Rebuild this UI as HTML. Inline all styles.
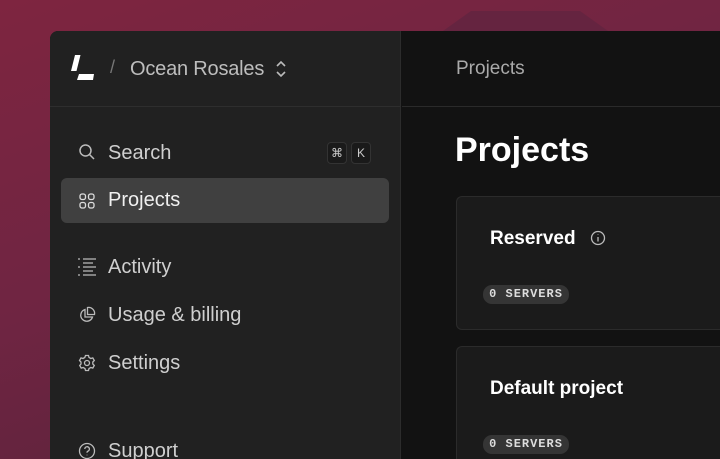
<!DOCTYPE html>
<html><head><meta charset="utf-8"><style>
*{margin:0;padding:0;box-sizing:border-box}
html,body{width:720px;height:459px;overflow:hidden}
body{position:relative;font-family:"Liberation Sans",sans-serif;background:linear-gradient(160deg,#7e2540 0%,#6f2542 45%,#522238 100%)}
.trap{position:absolute;left:443px;top:11px;width:165px;height:20px;background:#652440;clip-path:polygon(17% 0,83% 0,100% 100%,0 100%)}
.win{position:absolute;left:50px;top:31px;width:670px;height:428px;border-radius:8px 0 0 0;overflow:hidden;background:#121212}
.side{position:absolute;left:0;top:0;width:351px;height:100%;background:#212121;border-right:1px solid #2c2c2c}
.hdr{position:absolute;left:0;top:0;width:100%;height:76px;border-bottom:1px solid #2e2e2e}
.t{position:absolute;white-space:nowrap;color:#cfcfcf;font-size:20px}
.kbd{position:absolute;top:111px;width:20px;height:22px;border:1px solid #333;border-radius:4px;background:#1a1a1a;color:#ccc;font-size:12px;text-align:center;line-height:20px}
.sel{position:absolute;left:11px;top:147px;width:328px;height:45px;background:#404040;border-radius:6px}
svg{position:absolute}
.card{position:absolute;left:406px;width:264px;background:#1b1b1b;border:1px solid #2b2b2b;border-right:none;border-radius:6px 0 0 6px}
.pill{position:absolute;left:26px;background:#353535;border-radius:9px;height:19px;width:86px;color:#ddd;font-family:"Liberation Mono",monospace;font-size:12px;font-weight:bold;letter-spacing:1px;line-height:19px;text-align:center}
</style></head><body>
<div class="trap"></div>
<div class="win">
<div class="side">
<div class="hdr"></div>
<svg width="30" height="30" style="left:20px;top:22px" viewBox="0 0 30 30"><polygon points="5,2 10.5,2 6.5,18 1,18" fill="#fff"/><polygon points="9,24 24,24 23,30 7,30" fill="#fff" transform="translate(0,-3)"/></svg>
<div class="t" style="left:60px;top:26px;color:#777;font-size:18px">/</div>
<div class="t" style="left:80px;top:27px;color:#bdbdbd;letter-spacing:-0.2px">Ocean Rosales</div>
<svg width="12" height="18" style="left:225px;top:29px" viewBox="0 0 12 18" fill="none" stroke="#bbb" stroke-width="1.6"><path d="M2 6l4-4 4 4M2 12l4 4 4-4"/></svg>
<svg width="18" height="18" style="left:28px;top:112px" viewBox="0 0 18 18" fill="none" stroke="#bbb" stroke-width="1.5"><circle cx="7.5" cy="7.5" r="5.5"/><path d="M11.5 11.5l4.5 4.5"/></svg>
<div class="t" style="left:58px;top:111px">Search</div>
<div class="kbd" style="left:277px">⌘</div><div class="kbd" style="left:301px">K</div>
<div class="sel"></div>
<svg width="16" height="16" style="left:29px;top:162px" viewBox="0 0 16 16" fill="none" stroke="#ddd" stroke-width="1.3"><rect x="1" y="1" width="5.5" height="5.5" rx="2"/><rect x="9.5" y="1" width="5.5" height="5.5" rx="2"/><rect x="1" y="9.5" width="5.5" height="5.5" rx="2"/><rect x="9.5" y="9.5" width="5.5" height="5.5" rx="2"/></svg>
<div class="t" style="left:58px;top:158px;color:#f0f0f0">Projects</div>
<svg width="20" height="20" style="left:27px;top:226px" viewBox="0 0 20 20" fill="none" stroke="#bbb" stroke-width="1.3"><path d="M1 2h2M6 2h13M6 6h10M1 10h2M6 10h13M6 14h10M1 18h2M6 18h13"/></svg>
<div class="t" style="left:58px;top:225px">Activity</div>
<svg width="18" height="18" style="left:28px;top:275px" viewBox="0 0 18 18" fill="none" stroke="#bbb" stroke-width="1.3"><path d="M7 3.5A6 6 0 1 0 14.5 11H7z"/><path d="M9.5 1.5A6 6 0 0 1 16.5 8.5H9.5z"/></svg>
<div class="t" style="left:58px;top:273px">Usage &amp; billing</div>
<svg width="18" height="18" style="left:28px;top:323px" viewBox="0 0 18 18" fill="none" stroke="#bbb" stroke-width="1.3"><circle cx="9" cy="9" r="2.5"/><path d="M7.5 1.5h3l.5 2 1.8 1 2-.6 1.5 2.6-1.5 1.5v2l1.5 1.5-1.5 2.6-2-.6-1.8 1-.5 2h-3l-.5-2-1.8-1-2 .6-1.5-2.6L3 10V8L1.5 6.5 3 3.9l2 .6 1.8-1z"/></svg>
<div class="t" style="left:58px;top:321px">Settings</div>
<svg width="18" height="18" style="left:28px;top:411px" viewBox="0 0 18 18" fill="none" stroke="#bbb" stroke-width="1.3"><circle cx="9" cy="9" r="7.5"/><path d="M6.8 7a2.3 2.3 0 1 1 3 2.2c-.6.3-.8.7-.8 1.5M9 12.8v.4"/></svg>
<div class="t" style="left:58px;top:409px;height:19px;overflow:hidden">Support</div>
</div>
<div style="position:absolute;left:352px;top:0;width:318px;height:76px;border-bottom:1px solid #2a2a2a"></div>
<div class="t" style="left:406px;top:27px;color:#aaa;font-size:19px">Projects</div>
<div class="t" style="left:405px;top:100px;color:#fff;font-size:34px;font-weight:bold">Projects</div>
<div class="card" style="top:165px;height:134px">
<div class="t" style="left:33px;top:31px;color:#fff;font-size:19px;font-weight:bold">Reserved</div>
<svg width="16" height="16" style="left:133px;top:33px" viewBox="0 0 16 16" fill="none" stroke="#bbb" stroke-width="1.3"><circle cx="8" cy="8" r="6.5"/><path d="M8 7v4.5M8 4.5v.5"/></svg>
<div class="pill" style="top:88px">0 SERVERS</div>
</div>
<div class="card" style="top:315px;height:113px;border-bottom:none;border-radius:6px 0 0 0">
<div class="t" style="left:33px;top:31px;color:#fff;font-size:19px;font-weight:bold">Default project</div>
<div class="pill" style="top:88px">0 SERVERS</div>
</div>
</div>
</body></html>
